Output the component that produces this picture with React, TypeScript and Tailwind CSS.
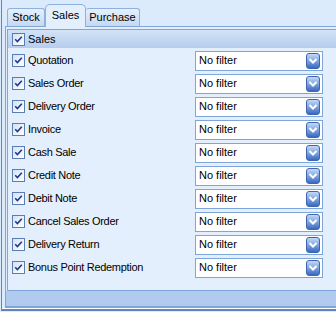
const rows = [
  'Quotation',
  'Sales Order',
  'Delivery Order',
  'Invoice',
  'Cash Sale',
  'Credit Note',
  'Debit Note',
  'Cancel Sales Order',
  'Delivery Return',
  'Bonus Point Redemption',
];

function Check() {
  return (
    <span className="flex h-[13px] w-[13px] shrink-0 items-center justify-center border border-[#5b7db6] bg-gradient-to-br from-[#d3e2f6] to-white">
      <svg width="9" height="9" viewBox="0 0 9 9">
        <path d="M1.2 4.3 L3.4 6.6 L7.8 1.8" fill="none" stroke="#22378c" strokeWidth="1.6" />
      </svg>
    </span>
  );
}

function FilterBox() {
  return (
    <div className="flex h-[20px] w-[128px] shrink-0 items-center border border-[#7fa6da] bg-white pl-[3px] pr-[2px]">
      <span className="flex-1 text-black">No filter</span>
      <span className="flex h-[16px] w-[14px] items-center justify-center rounded-[3px] border border-[#3d66ae] bg-gradient-to-b from-[#c2d9f7] via-[#7ea4e0] to-[#3a68bf]">
        <svg width="10" height="8" viewBox="0 0 10 8">
          <path d="M1.5 2 L5 5.5 L8.5 2" fill="none" stroke="#fff" strokeWidth="2" />
        </svg>
      </span>
    </div>
  );
}

export default function App() {
  return (
    <div
      className="h-[312px] w-[336px] overflow-hidden bg-[#dcebfb] pb-px pl-px text-[11px] leading-none text-black"
      style={{ fontFamily: '"Liberation Sans", Arial, sans-serif' }}
    >
      <div className="h-full border-b-2 border-l border-[#5f85c0]">
        <div className="flex h-full flex-col border-b border-white">
          {/* tabs */}
          <div className="relative z-10 flex h-[26px] shrink-0 items-end pl-[5px]">
            <div className="flex h-[18px] w-[38px] items-center justify-center rounded-t-[3px] border-x border-t border-[#8fb1de] bg-gradient-to-b from-[#e6f0fc] to-[#c4d9f4]">
              Stock
            </div>
            <div className="-mb-px flex h-[23px] w-[41px] items-center justify-center rounded-t-[5px] border-x border-t border-[#8fb1de] bg-[#e3effc] pb-[2px]">
              Sales
            </div>
            <div className="flex h-[18px] w-[54px] items-center justify-center rounded-t-[3px] border-r border-t border-[#8fb1de] bg-gradient-to-b from-[#e6f0fc] to-[#c4d9f4]">
              Purchase
            </div>
          </div>

          {/* tab page */}
          <div className="ml-[3px] flex flex-1 flex-col border-b-2 border-l border-t border-[#7fa6da] bg-[#b0cbed]">
            <div className="bg-[#e3effc] pl-px pt-[2px]">
              <div className="h-[262px] border border-r-0 border-[#7fa6da] bg-[#e3effc]">
                <div className="flex h-[18px] items-center gap-[3px] bg-gradient-to-b from-[#d3e3f7] to-[#b5cdee] pl-[4px]">
                  <Check />
                  <span>Sales</span>
                </div>
                <div className="mt-px flex flex-col">
                  {rows.map((r) => (
                    <div key={r} className="flex h-[23px] items-center">
                      <div className="flex w-[187px] items-center gap-[3px] pl-[4px]">
                        <Check />
                        <span className="tracking-[-0.3px]">{r}</span>
                      </div>
                      <FilterBox />
                    </div>
                  ))}
                </div>
              </div>
            </div>
            <div className="flex-1" />
          </div>
        </div>
      </div>
    </div>
  );
}
